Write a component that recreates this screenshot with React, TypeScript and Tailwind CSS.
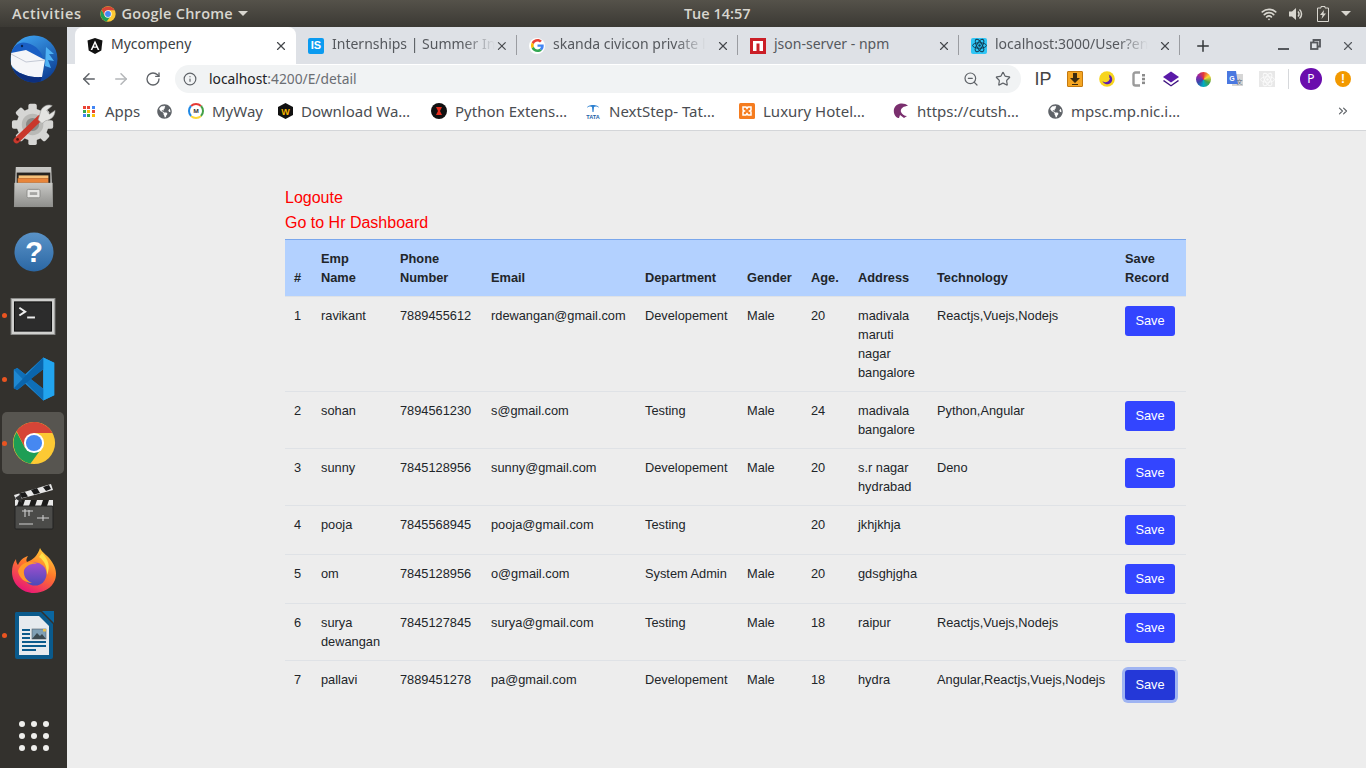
import React from "react";
import { ArrowLeft, ArrowRight, ChevronsRight, Info, Plus, RotateCw, Star, Wifi, X, ZoomOut } from "lucide-react";
import { FaGlobeAmericas } from "react-icons/fa";

const rows = [
  { id: 1, name: "ravikant", phone: "7889455612", email: "rdewangan@gmail.com", dept: "Developement", gender: "Male", age: 20, address: "madivala maruti nagar bangalore", tech: "Reactjs,Vuejs,Nodejs" },
  { id: 2, name: "sohan", phone: "7894561230", email: "s@gmail.com", dept: "Testing", gender: "Male", age: 24, address: "madivala bangalore", tech: "Python,Angular" },
  { id: 3, name: "sunny", phone: "7845128956", email: "sunny@gmail.com", dept: "Developement", gender: "Male", age: 20, address: "s.r nagar hydrabad", tech: "Deno" },
  { id: 4, name: "pooja", phone: "7845568945", email: "pooja@gmail.com", dept: "Testing", gender: "", age: 20, address: "jkhjkhja", tech: "" },
  { id: 5, name: "om", phone: "7845128956", email: "o@gmail.com", dept: "System Admin", gender: "Male", age: 20, address: "gdsghjgha", tech: "" },
  { id: 6, name: "surya dewangan", phone: "7845127845", email: "surya@gmail.com", dept: "Testing", gender: "Male", age: 18, address: "raipur", tech: "Reactjs,Vuejs,Nodejs" },
  { id: 7, name: "pallavi", phone: "7889451278", email: "pa@gmail.com", dept: "Developement", gender: "Male", age: 18, address: "hydra", tech: "Angular,Reactjs,Vuejs,Nodejs" },
];

const ChromeIcon = ({ size }: { size: number }) => (
  <svg width={size} height={size} viewBox="0 0 48 48">
    <circle cx="24" cy="24" r="23" fill="#fcc934" />
    <path d="M5 12 A23 23 0 0 0 20 46.6 L30 33 L14 29 Z" fill="#1e9e55" />
    <path d="M5 11 A23 23 0 0 1 44 13 L24 13 L14.5 30 Z" fill="#d64537" />
    <circle cx="24" cy="24" r="11" fill="#fff" />
    <circle cx="24" cy="24" r="8.8" fill="#4688f1" />
  </svg>
);

const Thunderbird = () => (
  <svg width="48" height="48" viewBox="0 0 48 48">
    <defs>
      <linearGradient id="tb" x1="0.2" y1="0" x2="0.8" y2="1">
        <stop offset="0" stopColor="#3fa4f2" />
        <stop offset="1" stopColor="#0a3a90" />
      </linearGradient>
      <clipPath id="tbc"><circle cx="24" cy="24" r="23.5" /></clipPath>
    </defs>
    <circle cx="24" cy="24" r="23.5" fill="url(#tb)" />
    <g clipPath="url(#tbc)">
      <path d="M36 12 L44 19 L39 19 L44 26 L38 25 L41 33 L35 31 Z" fill="#4fb2f4" />
      <path d="M0 19 C4 9 11 6 17 8 C26 10 33 17 34 28 C27 19 14 15 0 19 Z" fill="#1a5fc4" />
      <path d="M1 18 L16 15 L35 25 L32 42 C20 43 7 39 1 30 Z" fill="#f5f6f9" />
      <path d="M1 19 L16 27 L35 25" fill="none" stroke="#c3c8d4" strokeWidth="1" />
      <path d="M0 31 C8 39 20 43 32 42 L30 48 H8 Z" fill="#0d2f7e" />
    </g>
    <circle cx="12" cy="11" r="1.2" fill="#0c2450" />
  </svg>
);

const SettingsIcon = () => (
  <svg width="45" height="45" viewBox="0 0 48 48">
    <g fill="#d6d6d4">
      <circle cx="23" cy="25" r="17" />
      {[0, 45, 90, 135, 180, 225, 270, 315].map((a) => (
        <rect key={a} x="18.5" y="3" width="9" height="10" rx="2" transform={`rotate(${a} 23 25)`} />
      ))}
    </g>
    <circle cx="23" cy="25" r="11.5" fill="#b9b9b6" />
    <circle cx="23" cy="25" r="7" fill="#8a8a87" />
    <path d="M6 42 L31 18" stroke="#c9382c" strokeWidth="6.5" strokeLinecap="round" />
    <path d="M29 20 L32 10 C34 5 40 3 44 5 L38 10 L41 14 L47 10 C47 16 43 20 37 21 L33 24 Z" fill="#e4e4e2" stroke="#9a9a97" strokeWidth="0.6" />
    <circle cx="7" cy="41" r="1.5" fill="#5a1510" />
  </svg>
);

const FilesIcon = () => (
  <svg width="41" height="43" viewBox="0 0 44 46">
    <defs>
      <linearGradient id="fc" x1="0" y1="0" x2="0" y2="1">
        <stop offset="0" stopColor="#c9c9c6" />
        <stop offset="1" stopColor="#8e8e8b" />
      </linearGradient>
    </defs>
    <path d="M3 1 H41 L43 44 H1 Z" fill="url(#fc)" />
    <rect x="4" y="7" width="36" height="12" fill="#26231f" />
    <rect x="6" y="10" width="32" height="3" fill="#f6c27a" />
    <rect x="5" y="13" width="33" height="5" fill="#e8853a" />
    <rect x="1.5" y="18" width="41" height="26" fill="url(#fc)" />
    <rect x="15" y="25" width="14" height="9" rx="1.5" fill="#e6e6e4" stroke="#8a8a88" />
    <rect x="18" y="28" width="8" height="3" fill="#a5a5a3" />
  </svg>
);

const HelpIcon = () => (
  <svg className="mt-[1px]" width="40" height="40" viewBox="0 0 42 42">
    <defs>
      <linearGradient id="hp" x1="0" y1="0" x2="0" y2="1">
        <stop offset="0" stopColor="#5a93c8" />
        <stop offset="1" stopColor="#2b67a4" />
      </linearGradient>
    </defs>
    <circle cx="21" cy="21" r="20.5" fill="url(#hp)" />
    <text x="21" y="32" textAnchor="middle" fontFamily="Liberation Sans, sans-serif" fontWeight="700" fontSize="31" fill="#fff">?</text>
  </svg>
);

const TerminalIcon = () => (
  <svg className="mr-[1px] mt-[3px]" width="46" height="37" viewBox="0 0 46 38">
    <rect x="0.5" y="0.5" width="45" height="37" fill="#d0d0ce" stroke="#8c8c8a" />
    <rect x="4" y="4" width="38" height="30" fill="#2c2c2c" stroke="#111" />
    <path d="M9 10 L15 14 L9 18" fill="none" stroke="#eee" strokeWidth="2" />
    <rect x="17" y="19" width="8" height="2" fill="#eee" />
  </svg>
);

const VsCodeIcon = () => (
  <svg width="44" height="44" viewBox="0 0 100 100">
    <path d="M71 99 L96 87 V13 L71 1 L30 39 L12 25 L4 29 V71 L12 75 L30 61 Z M71 28 L42 50 L71 72 Z" fill="#1e88d2" fillRule="evenodd" />
    <path d="M71 1 L96 13 V87 L71 99 Z" fill="#22a4ee" />
    <path d="M4 29 L12 25 L71 72 V99 Z" fill="#0f6fb8" />
    <path d="M4 71 L12 75 L71 28 V1 Z" fill="#0a65ad" />
  </svg>
);

const ClapperIcon = () => (
  <svg width="42" height="46" viewBox="0 0 42 46">
    <path d="M1 11 L38 0 L40 6 L3 16 Z" fill="#e8e8e8" />
    <path d="M6 9.5 L12 8 L15 12.5 L9 14 Z M18 6 L24 4 L27 9 L21 10.5 Z M30 3 L36 1 L38 5 L33 7 Z" fill="#1a1a1a" />
    <rect x="2" y="16" width="38" height="6" fill="#e8e8e8" />
    <path d="M6 16 H12 L10 22 H4 Z M18 16 H24 L22 22 H16 Z M30 16 H36 L34 22 H28 Z" fill="#1a1a1a" />
    <rect x="2" y="22" width="38" height="23" rx="1" fill="#4b4b49" stroke="#222" />
    <path d="M9 27 H20 M12 25 V33 M16 26 V32 M24 34 H36 M30 31 V37 M6 40 H20" stroke="#cfcfcf" strokeWidth="1.1" fill="none" />
    <path d="M2 14 L8 10 L9 19 Z" fill="#333" />
  </svg>
);

const FirefoxIcon = () => (
  <svg className="-mt-[2px]" width="46" height="46" viewBox="0 0 46 46">
    <defs>
      <linearGradient id="ff" x1="0.8" y1="0" x2="0.3" y2="1">
        <stop offset="0" stopColor="#ffd43a" />
        <stop offset="0.45" stopColor="#ff7a2a" />
        <stop offset="1" stopColor="#e8127a" />
      </linearGradient>
      <linearGradient id="fp" x1="0.5" y1="0" x2="0.5" y2="1">
        <stop offset="0" stopColor="#a64fd0" />
        <stop offset="1" stopColor="#4a4ab8" />
      </linearGradient>
    </defs>
    <path d="M29 1 C31 6 38 9 41 15 C45 21 46 27 44 33 C41 41 32 46 23 46 C11 46 1 37 1 25 C1 20 2 16 5 12 C5 15 6 17 7 18 C9 13 13 10 17 9 C15 12 15 14 16 15 C22 13 27 8 29 1 Z" fill="url(#ff)" />
    <circle cx="24" cy="27" r="11.5" fill="url(#fp)" />
    <path d="M7 24 C10 15 19 13 26 17 C20 16 15 19 13 23 C12 28 15 34 21 36 C14 36 8 31 7 24 Z" fill="#ff9a2a" />
    <path d="M31 6 C37 12 40 19 36 28 C36 20 34 14 28 10 Z" fill="#ffe04a" />
  </svg>
);

const WriterIcon = () => (
  <svg width="40" height="48" viewBox="0 0 40 48">
    <path d="M2 1 H27 L39 13 V46 A2 2 0 0 1 37 48 H3 A2 2 0 0 1 1 46 V3 A2 2 0 0 1 2 1 Z" fill="#0a5a8c" />
    <path d="M5 5 H25 L35 15 V44 H5 Z" fill="#e6eaee" />
    <path d="M28 0 H40 V12 Z" fill="#0a66a0" />
    <g fill="#0a5a8c">
      <rect x="8" y="18" width="8" height="2" />
      <rect x="8" y="22" width="8" height="2" />
      <rect x="8" y="26" width="8" height="2" />
      <rect x="8" y="30" width="24" height="2" />
      <rect x="8" y="34" width="24" height="2" />
      <rect x="8" y="38" width="14" height="2" />
    </g>
    <rect x="18" y="18" width="14" height="10" fill="#7f9fb5" stroke="#50606a" strokeWidth="0.6" />
    <path d="M18 28 L23 22 L26 25 L28 23 L32 28 Z" fill="#3c4a52" />
    <rect x="29" y="18" width="3" height="2.5" fill="#e8c04a" />
  </svg>
);

const DockItem = ({ children, running, active }: { children: React.ReactNode; running?: boolean; active?: boolean }) => (
  <div className="relative flex h-[64px] w-full shrink-0 items-center justify-center">
    {active && <div className="absolute left-[2px] top-[1px] h-[62px] w-[62px] rounded-[5px] bg-[#575550]" />}
    {running && <div className="absolute left-[2px] top-[30px] h-[5px] w-[5px] rounded-full bg-[#e95420]" />}
    <div className="relative flex items-center justify-center">{children}</div>
  </div>
);

const AngularFav = () => (
  <svg width="16" height="16" viewBox="0 0 16 16">
    <path d="M8 0 L15.5 2.6 L14.3 12.4 L8 16 L1.7 12.4 L0.5 2.6 Z" fill="#111" />
    <path d="M8 2.5 L3.6 12 H5.3 L6.2 9.8 H9.8 L10.7 12 H12.4 Z M6.9 8.4 L8 5.7 L9.1 8.4 Z" fill="#fff" fillRule="evenodd" />
  </svg>
);

const IsFav = () => (
  <div className="flex h-4 w-4 items-center justify-center rounded-[2px] bg-[#0b9bf0] font-['Liberation_Sans',sans-serif] text-[11px] font-bold leading-none text-white">IS</div>
);

const GoogleFav = () => (
  <div className="flex h-4 w-4 items-center justify-center rounded-full bg-white">
    <svg width="13" height="13" viewBox="0 0 48 48">
      <path fill="#EA4335" d="M24 9.5c3.54 0 6.71 1.22 9.21 3.6l6.85-6.85C35.9 2.38 30.47 0 24 0 14.62 0 6.51 5.38 2.56 13.22l7.98 6.19C12.43 13.72 17.74 9.5 24 9.5z" />
      <path fill="#4285F4" d="M46.98 24.55c0-1.57-.15-3.09-.38-4.55H24v9.02h12.94c-.58 2.96-2.26 5.48-4.78 7.18l7.73 6c4.51-4.18 7.09-10.36 7.09-17.65z" />
      <path fill="#FBBC05" d="M10.53 28.59c-.48-1.45-.76-2.99-.76-4.59s.27-3.14.76-4.59l-7.98-6.19C.92 16.46 0 20.12 0 24c0 3.88.92 7.54 2.56 10.78l7.97-6.19z" />
      <path fill="#34A853" d="M24 48c6.48 0 11.93-2.13 15.89-5.81l-7.73-6c-2.15 1.45-4.92 2.3-8.16 2.3-6.26 0-11.57-4.22-13.47-9.91l-7.98 6.19C6.51 42.62 14.62 48 24 48z" />
    </svg>
  </div>
);

const NpmFav = () => (
  <svg width="16" height="16" viewBox="0 0 16 16">
    <rect width="16" height="16" fill="#cb1f27" />
    <rect x="3" y="3" width="10" height="10" fill="#fff" />
    <rect x="6.5" y="5.5" width="3" height="7.5" fill="#cb1f27" />
  </svg>
);

const ReactAtom = ({ color, size = 14 }: { color: string; size?: number }) => (
  <svg width={size} height={size} viewBox="0 0 24 24" fill="none" stroke={color} strokeWidth="1.6">
    <ellipse cx="12" cy="12" rx="11" ry="4.4" />
    <ellipse cx="12" cy="12" rx="11" ry="4.4" transform="rotate(60 12 12)" />
    <ellipse cx="12" cy="12" rx="11" ry="4.4" transform="rotate(120 12 12)" />
    <circle cx="12" cy="12" r="2" fill={color} stroke="none" />
  </svg>
);

const ReactFav = () => (
  <div className="flex h-4 w-4 items-center justify-center rounded-[2px] bg-[#2fc6f6]">
    <ReactAtom color="#123a52" size={15} />
  </div>
);

const Tab = ({ icon, title, active, fade, divider }: { icon: React.ReactNode; title: string; active?: boolean; fade?: boolean; divider?: boolean }) => (
  <div className={`relative flex h-[37px] w-[221px] shrink-0 items-center pl-[12px] pr-[8px] ${active ? "rounded-t-[8px] bg-white text-[#3c4043]" : "text-[#55585d]"}`}>
    <div className="flex w-[24px] shrink-0 items-center">{icon}</div>
    <div className={`whitespace-nowrap pb-[5px] text-[14px] ${fade ? "[mask-image:linear-gradient(to_right,black_80%,transparent)]" : ""}`}>{title}</div>
    <X size={14} strokeWidth={2} className="ml-auto text-[#45484c]" />
    {divider && <div className="absolute right-0 top-[8px] h-[20px] w-px bg-[#9a9ca1]" />}
  </div>
);

const Bookmark = ({ icon, label, width }: { icon: React.ReactNode; label: string; width: string }) => (
  <div className={`flex shrink-0 items-center ${width}`}>
    <div className="flex w-[16px] shrink-0 items-center justify-center">{icon}</div>
    {label && <span className="ml-[8px] whitespace-nowrap text-[15px] text-[#4a4d52]">{label}</span>}
  </div>
);

const Globe = () => <FaGlobeAmericas size={15} className="text-[#5f6368]" />;

const AppsIcon = () => (
  <div className="grid w-[12px] grid-cols-3 gap-[1px]">
    {["#ea4335", "#ea4335", "#4285f4", "#34a853", "#fbbc05", "#ea4335", "#4285f4", "#34a853", "#fbbc05"].map((c, i) => (
      <div key={i} className="h-[3px] w-[3px]" style={{ backgroundColor: c }} />
    ))}
  </div>
);

const ExtSlot = ({ children }: { children: React.ReactNode }) => (
  <div className="flex h-[28px] w-[32px] shrink-0 items-center justify-center">{children}</div>
);

const cell = "border-b border-[#dfe2e6] p-[9px] align-top";
const lastCell = "p-[9px] align-top";
const head = "border-b border-[#dfe2e6] p-[9px] text-left align-bottom font-bold";

export default function App() {
  return (
    <div className="flex h-screen w-[1366px] flex-col overflow-hidden font-['Noto_Sans',sans-serif]">
      {/* gnome top bar */}
      <div className="flex h-[27px] shrink-0 items-center bg-gradient-to-b from-[#55524a] to-[#3b3934] pl-[12px] pr-[15px] font-['Open_Sans',sans-serif] text-[14.5px] font-semibold text-[#d8d6cf]">
        <span className="tracking-[0.6px]">Activities</span>
        <div className="ml-[18px]"><ChromeIcon size={16} /></div>
        <span className="ml-[6px] tracking-[0.25px]">Google Chrome</span>
        <div className="ml-[5px] h-0 w-0 border-x-[5px] border-t-[5px] border-x-transparent border-t-[#d8d6cf]" />
        <span className="ml-[436px]">Tue 14:57</span>
        <div className="ml-auto flex items-center">
          <Wifi size={16} strokeWidth={2.6} className="text-[#d8d6cf]" />
          <svg className="ml-[11px]" width="16" height="16" viewBox="0 0 16 16" fill="none">
            <path d="M1 5.5 H4 L8 2 V14 L4 10.5 H1 Z" fill="#d8d6cf" />
            <path d="M10 5.5 A3.5 3.5 0 0 1 10 10.5 M11.5 3.5 A6 6 0 0 1 11.5 12.5" stroke="#d8d6cf" strokeWidth="1.5" />
          </svg>
          <svg className="ml-[13px]" width="12" height="16" viewBox="0 0 12 16">
            <path d="M4 0.5 H8 V2 H11.5 V15.5 H0.5 V2 H4 Z" fill="none" stroke="#d8d6cf" strokeWidth="1" />
            <path d="M7 4 L3 9 H5.5 L4.5 13 L9 7.5 H6.5 Z" fill="#d8d6cf" />
          </svg>
          <div className="ml-[12px] h-0 w-0 border-x-[5px] border-t-[5px] border-x-transparent border-t-[#d8d6cf]" />
        </div>
      </div>

      <div className="flex min-h-0 flex-1">
        {/* dock */}
        <div className="flex h-full w-[67px] shrink-0 flex-col bg-[#33312d]">
          <DockItem><Thunderbird /></DockItem>
          <DockItem><SettingsIcon /></DockItem>
          <DockItem><FilesIcon /></DockItem>
          <DockItem><HelpIcon /></DockItem>
          <DockItem running><TerminalIcon /></DockItem>
          <DockItem running><VsCodeIcon /></DockItem>
          <DockItem running active><ChromeIcon size={44} /></DockItem>
          <DockItem><ClapperIcon /></DockItem>
          <DockItem><FirefoxIcon /></DockItem>
          <DockItem running><WriterIcon /></DockItem>
          <div className="mt-auto mb-[17px] grid w-[30px] grid-cols-3 gap-[6px] self-center">
            {[0, 1, 2, 3, 4, 5, 6, 7, 8].map((i) => (
              <div key={i} className="h-[6px] w-[6px] rounded-full bg-[#eeeeec]" />
            ))}
          </div>
        </div>

        {/* browser */}
        <div className="flex min-w-0 flex-1 flex-col bg-[#ededed]">
          <div className="flex h-[37px] shrink-0 items-center bg-[#dee1e6] pl-[8px]">
            <Tab active icon={<AngularFav />} title="Mycompeny" />
            <Tab icon={<IsFav />} title="Internships | Summer In" fade divider />
            <Tab icon={<GoogleFav />} title="skanda civicon private l" fade divider />
            <Tab icon={<NpmFav />} title="json-server - npm" divider />
            <Tab icon={<ReactFav />} title="localhost:3000/User?en" fade divider />
            <Plus size={18} strokeWidth={2} className="ml-[14px] text-[#333639]" />
            <div className="ml-[66px] mt-[6px] h-[2px] w-[11px] bg-[#55585d]" />
            <svg className="ml-[21px] -mt-[2px]" width="11" height="11" viewBox="0 0 11 11" fill="none" stroke="#55585d" strokeWidth="1.8">
              <rect x="1" y="3.5" width="6.5" height="6.5" />
              <path d="M3.5 3 V1 H10 V7.5 H8" />
            </svg>
            <X size={14} strokeWidth={2} className="ml-[20px] text-[#55585d]" />
          </div>

          <div className="flex h-[30px] shrink-0 items-center bg-white pl-[13px]">
            <ArrowLeft size={18} strokeWidth={2} className="text-[#5f6368]" />
            <ArrowRight size={18} strokeWidth={2} className="ml-[14px] text-[#b4b6b9]" />
            <RotateCw size={16} strokeWidth={2} className="ml-[15px] text-[#5f6368]" />
            <div className="ml-[14px] flex h-[28px] w-[846px] shrink-0 items-center rounded-full bg-[#f1f3f4] pl-[8px] pr-[10px]">
              <Info size={14} strokeWidth={2} className="text-[#5f6368]" />
              <span className="ml-[12px] text-[13.8px] text-[#202124]">localhost<span className="text-[#6b6e73]">:4200/E/detail</span></span>
              <ZoomOut size={16} strokeWidth={1.8} className="ml-auto text-[#5f6368]" />
              <Star size={16} strokeWidth={1.8} className="ml-[16px] text-[#5f6368]" />
            </div>
            <div className="ml-[6px] flex items-center">
              <ExtSlot><span className="font-['Liberation_Sans',sans-serif] text-[18px] leading-none text-[#444]">IP</span></ExtSlot>
              <ExtSlot>
                <div className="flex h-[16px] w-[16px] items-center justify-center rounded-[1px] border border-[#c47a10] bg-[#f5a623]">
                  <svg width="10" height="12" viewBox="0 0 10 12"><path d="M3 0 H7 V5 H10 L5 10 L0 5 H3 Z M2 11 H8 V12 H2 Z" fill="#3a2a10" /></svg>
                </div>
              </ExtSlot>
              <ExtSlot>
                <svg width="16" height="16" viewBox="0 0 16 16">
                  <circle cx="8" cy="8" r="7.8" fill="#f7d51d" />
                  <path d="M9.5 3.5 A5 5 0 1 1 3.5 10 A4.2 4.2 0 0 0 9.5 3.5 Z" fill="#5c1fb0" />
                  <circle cx="11" cy="6" r="0.9" fill="#5c1fb0" />
                </svg>
              </ExtSlot>
              <ExtSlot>
                <svg width="14" height="16" viewBox="0 0 14 16">
                  <path d="M8 1.5 H3.5 A2 2 0 0 0 1.5 3.5 V12.5 A2 2 0 0 0 3.5 14.5 H8" fill="none" stroke="#9b9b9b" strokeWidth="2.4" />
                  <g fill="#8b8b8b"><rect x="10" y="3" width="3" height="2.5" /><rect x="10" y="6.8" width="3" height="2.5" /><rect x="10" y="10.6" width="3" height="2.5" /></g>
                </svg>
              </ExtSlot>
              <ExtSlot>
                <svg width="16" height="16" viewBox="0 0 16 16">
                  <path d="M8 0.5 L16 6 L8 11.5 L0 6 Z" fill="#5a1aa8" />
                  <path d="M1 9 L8 14 L15 9 L16 10 L8 15.5 L0 10 Z" fill="#3f1280" />
                </svg>
              </ExtSlot>
              <ExtSlot>
                <div className="h-[15px] w-[15px] rounded-full bg-[conic-gradient(#e53935,#fdd835,#43a047,#00acc1,#3949ab,#8e24aa,#e53935)]" />
              </ExtSlot>
              <ExtSlot>
                <svg width="16" height="16" viewBox="0 0 16 16">
                  <rect x="5" y="3" width="11" height="12" fill="#d6d6d6" />
                  <path d="M0 0 H9 L11 13 H0 Z" fill="#4a78e0" />
                  <text x="5" y="9.5" textAnchor="middle" fontSize="7" fontWeight="700" fill="#fff" fontFamily="Liberation Sans, sans-serif">G</text>
                  <text x="12.5" y="13" textAnchor="middle" fontSize="6" fill="#5a6a80" fontFamily="Noto Sans CJK SC, sans-serif">文</text>
                </svg>
              </ExtSlot>
              <ExtSlot>
                <div className="flex h-4 w-4 items-center justify-center bg-[#e8e8e8]"><ReactAtom color="#fbfbfb" size={15} /></div>
              </ExtSlot>
              <div className="ml-[5px] h-[20px] w-px bg-[#d6d8db]" />
              <div className="ml-[11px] flex h-[22px] w-[22px] shrink-0 items-center justify-center rounded-full bg-[#6a0dad] text-[12px] text-white">P</div>
              <div className="ml-[13px] flex h-4 w-4 items-center justify-center rounded-full bg-[#f29900] font-['Liberation_Sans',sans-serif] text-[12px] font-bold leading-none text-white">!</div>
            </div>
          </div>

          <div className="flex h-[37px] shrink-0 items-center border-b border-[#d4d6d9] bg-white pb-[2px] pl-[14px]">
            <Bookmark width="w-[75px]" icon={<AppsIcon />} label="Apps" />
            <Bookmark width="w-[32px]" icon={<Globe />} label="" />
            <Bookmark width="w-[89px]" icon={
              <div className="flex h-4 w-4 items-center justify-center rounded-full border-2 border-t-[#e53935] border-r-[#43a047] border-b-[#fdd835] border-l-[#1e88e5] bg-white text-[6px] font-bold leading-none text-[#333]">M</div>
            } label="MyWay" />
            <Bookmark width="w-[154px]" icon={
              <svg width="15" height="16" viewBox="0 0 15 16"><path d="M7.5 0 L15 4 V12 L7.5 16 L0 12 V4 Z" fill="#111" /><text x="7.5" y="11.5" textAnchor="middle" fontSize="9" fontWeight="700" fill="#f6b500" fontFamily="Liberation Sans, sans-serif">W</text></svg>
            } label="Download Wa…" />
            <Bookmark width="w-[154px]" icon={
              <svg width="16" height="16" viewBox="0 0 16 16"><circle cx="8" cy="8" r="8" fill="#111" /><path d="M5 4 H11 L9 8 L11 12 H5 L7 8 Z" fill="#e52d1d" /></svg>
            } label="Python Extens…" />
            <Bookmark width="w-[154px]" icon={
              <svg width="16" height="16" viewBox="0 0 16 16">
                <path d="M2 5 C2 1 14 1 14 5 C14 3.5 9.5 3 9 4 L8.5 9 H7.5 L7 4 C6.5 3 2 3.5 2 5 Z" fill="#2a7fd0" />
                <text x="8" y="15.5" textAnchor="middle" fontSize="5.5" fontWeight="700" fill="#1d5fa8" fontFamily="Liberation Sans, sans-serif">TATA</text>
              </svg>
            } label="NextStep- Tat…" />
            <Bookmark width="w-[154px]" icon={
              <svg width="16" height="16" viewBox="0 0 16 16"><rect width="16" height="16" rx="1.5" fill="#f57c1f" /><path d="M4 4 H7 L8 5.5 L9 4 H12 V7 L10.5 8 L12 9 V12 H9 L8 10.5 L7 12 H4 V9 L5.5 8 L4 7 Z" fill="none" stroke="#fff" strokeWidth="1.5" /></svg>
            } label="Luxury Hotel…" />
            <Bookmark width="w-[154px]" icon={
              <svg width="16" height="16" viewBox="0 0 16 16"><path d="M15 3 C11 -1 3 0 1 6 C0 11 3 15 6 15 L7 12 L11 15 L14 13 C11 13 9 11 8 9 C7 6 10 3 15 3 Z" fill="#7a2f6e" /></svg>
            } label="https://cutsh…" />
            <Bookmark width="w-[289px]" icon={<Globe />} label="mpsc.mp.nic.i…" />
            <ChevronsRight size={14} strokeWidth={2} className="text-[#5f6368]" />
          </div>

          {/* page */}
          <div className="flex-1 pl-[218px] pr-[180px] pt-[54px] font-['Liberation_Sans',sans-serif]">
            <div className="text-[16px] leading-[25px] text-[#ff0000]">Logoute</div>
            <div className="mb-[4px] text-[16px] leading-[25px] text-[#ff0000]">Go to Hr Dashboard</div>
            <table className="w-[901px] table-fixed border-t border-[#7aa7ec] text-[12.8px] leading-[19px] text-[#212529]">
              <thead className="bg-[#b3d1ff]">
                <tr>
                  <th className={`${head} w-[27px]`}>#</th>
                  <th className={`${head} w-[79px]`}>Emp Name</th>
                  <th className={`${head} w-[91px]`}>Phone Number</th>
                  <th className={`${head} w-[154px]`}>Email</th>
                  <th className={`${head} w-[102px]`}>Department</th>
                  <th className={`${head} w-[64px]`}>Gender</th>
                  <th className={`${head} w-[47px]`}>Age.</th>
                  <th className={`${head} w-[79px]`}>Address</th>
                  <th className={`${head} w-[188px]`}>Technology</th>
                  <th className={`${head} w-[70px]`}>Save Record</th>
                </tr>
              </thead>
              <tbody>
                {rows.map((r) => {
                  const c = r.id === 7 ? lastCell : cell;
                  return (
                    <tr key={r.id}>
                      <td className={c}>{r.id}</td>
                      <td className={c}>{r.name}</td>
                      <td className={c}>{r.phone}</td>
                      <td className={c}>{r.email}</td>
                      <td className={c}>{r.dept}</td>
                      <td className={c}>{r.gender}</td>
                      <td className={c}>{r.age}</td>
                      <td className={c}>{r.address}</td>
                      <td className={`${c} whitespace-nowrap`}>{r.tech}</td>
                      <td className={c}>
                        <button className={`h-[30px] w-[50px] rounded-[3px] pb-[1px] text-[12.8px] text-white ${r.id === 7 ? "bg-[#2438d8] ring-[3px] ring-[#9fb4f2]" : "bg-[#3345ff]"}`}>Save</button>
                      </td>
                    </tr>
                  );
                })}
              </tbody>
            </table>
          </div>
        </div>
      </div>
    </div>
  );
}
